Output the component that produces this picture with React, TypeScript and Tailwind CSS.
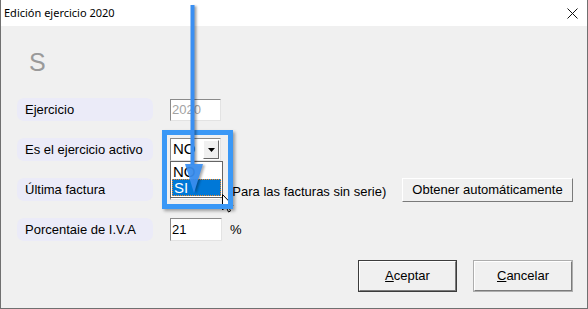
import React from "react";

function Field({ children, className = "" }: { children?: React.ReactNode; className?: string }) {
  return (
    <div
      className={`h-[22px] w-[51px] bg-white border border-t-[#8a8a8a] border-l-[#8a8a8a] border-b-[#e3e3e3] border-r-[#e3e3e3] flex items-center pl-[1px] ${className}`}
    >
      {children}
    </div>
  );
}

function Label({ text }: { text: string }) {
  return (
    <div className="h-[23px] w-[136px] shrink-0 rounded-[7px] bg-[#ebebf8] flex items-center pl-[8px] text-[13px] text-black">
      {text}
    </div>
  );
}

function ClassicButton({ children, def = false, className = "" }: { children: React.ReactNode; def?: boolean; className?: string }) {
  return (
    <div className={`${def ? "border border-[#3c3c3c]" : ""} ${className}`}>
      <div className="h-full w-full bg-[#f0f0f0] border border-t-white border-l-white border-b-[#7a7a7a] border-r-[#7a7a7a] flex items-center justify-center text-[13px] text-black">
        {children}
      </div>
    </div>
  );
}

export default function App() {
  return (
    <div className="relative w-[588px] h-[309px] overflow-hidden bg-[#f0f0f0] border-l border-r border-b border-[#707070] font-['Liberation_Sans',Arial,sans-serif] text-black">
      {/* title bar */}
      <div className="h-[26px] bg-white flex items-center justify-between pl-[3px] pr-[9px]">
        <span className="font-['Noto_Sans',sans-serif] text-[11px] text-black">Edición ejercicio 2020</span>
        <svg width="11" height="11" viewBox="0 0 11 11">
          <path d="M0.5 0.5 L10.5 10.5 M10.5 0.5 L0.5 10.5" stroke="#111" strokeWidth="1" />
        </svg>
      </div>

      <div className="pl-[16px] pr-[14px]">
        <div className="h-[72px] pt-[24px] pl-[12px] text-[25px] leading-none text-[#9a9a9a]">S</div>

        <div className="flex flex-col gap-[17px]">
          <div className="flex items-center h-[23px]">
            <Label text="Ejercicio" />
            <Field className="ml-[17px]">
              <span className="text-[13px] text-[#a3a3a3]">2020</span>
            </Field>
          </div>

          <div className="flex items-center h-[23px]">
            <Label text="Es el ejercicio activo" />
            <div className="ml-[17px] h-[23px] w-[51px] bg-white border border-t-[#8a8a8a] border-l-[#8a8a8a] border-b-[#e3e3e3] border-r-[#e3e3e3] flex items-stretch">
              <div className="flex-1 flex items-center pl-[2px] text-[15px]">NO</div>
              <div className="w-[16px] my-[1px] mr-[1px] bg-[#f0f0f0] border border-t-white border-l-white border-b-[#696969] border-r-[#696969] flex items-center justify-center">
                <svg width="7" height="4" viewBox="0 0 7 4">
                  <path d="M0 0 H7 L3.5 4 Z" fill="#000" />
                </svg>
              </div>
            </div>
          </div>

          <div className="flex items-start h-[23px]">
            <Label text="Última factura" />
            <Field className="ml-[17px]" />
            <span className="ml-[7px] mt-[4px] text-[13px]">(Para las facturas sin serie)</span>
            <ClassicButton className="ml-auto h-[24px] w-[171px]">Obtener automáticamente</ClassicButton>
          </div>

          <div className="flex items-center h-[23px]">
            <Label text="Porcentaie de I.V.A" />
            <Field className="ml-[17px] w-[52px] h-[23px]">
              <span className="text-[13px]">21</span>
            </Field>
            <span className="ml-[8px] text-[13px]">%</span>
          </div>
        </div>

        <div className="flex justify-end gap-[16px] mt-[19px]">
          <ClassicButton def className="h-[32px] w-[99px]">
            <span><span className="underline">A</span>ceptar</span>
          </ClassicButton>
          <ClassicButton className="h-[32px] w-[100px] border border-[#adadad]">
            <span><span className="underline">C</span>ancelar</span>
          </ClassicButton>
        </div>
      </div>

      {/* dropdown list */}
      <div className="absolute left-[169px] top-[161px] w-[53px] h-[37px] bg-white border border-[#646464] p-[1px] text-[15px] leading-none">
        <div className="h-[16px] flex items-center pl-[1px]">NO</div>
        <div className="h-[17px] bg-[#0078d7] border border-dotted border-[#f08a24] flex items-center pl-[1px] text-white">SI</div>
      </div>

      {/* mouse cursor */}
      <svg className="absolute left-[221px] top-[194px]" width="12" height="19" viewBox="0 0 12 19">
        <path d="M0.5 0.5 V16 L4 12.5 L6.5 18 L8.5 17 L6 11.5 H11 Z" fill="#fff" stroke="#000" strokeWidth="1" />
      </svg>

      {/* highlight box */}
      <div className="absolute left-[161px] top-[130px] w-[71px] h-[79px] border-[5px] border-[#3a98f6] shadow-[2px_2px_3px_rgba(0,0,0,0.35)]" />

      {/* arrow */}
      <svg className="absolute left-[180px] top-0 drop-shadow-[2px_1px_1px_rgba(0,0,0,0.35)]" width="30" height="200" viewBox="0 0 30 200">
        <rect x="9.5" y="5" width="4" height="160" fill="#3a8ff2" />
        <path d="M4 164 H22 L13 193 Z" fill="#3a8ff2" fillOpacity="0.92" />
      </svg>
    </div>
  );
}
